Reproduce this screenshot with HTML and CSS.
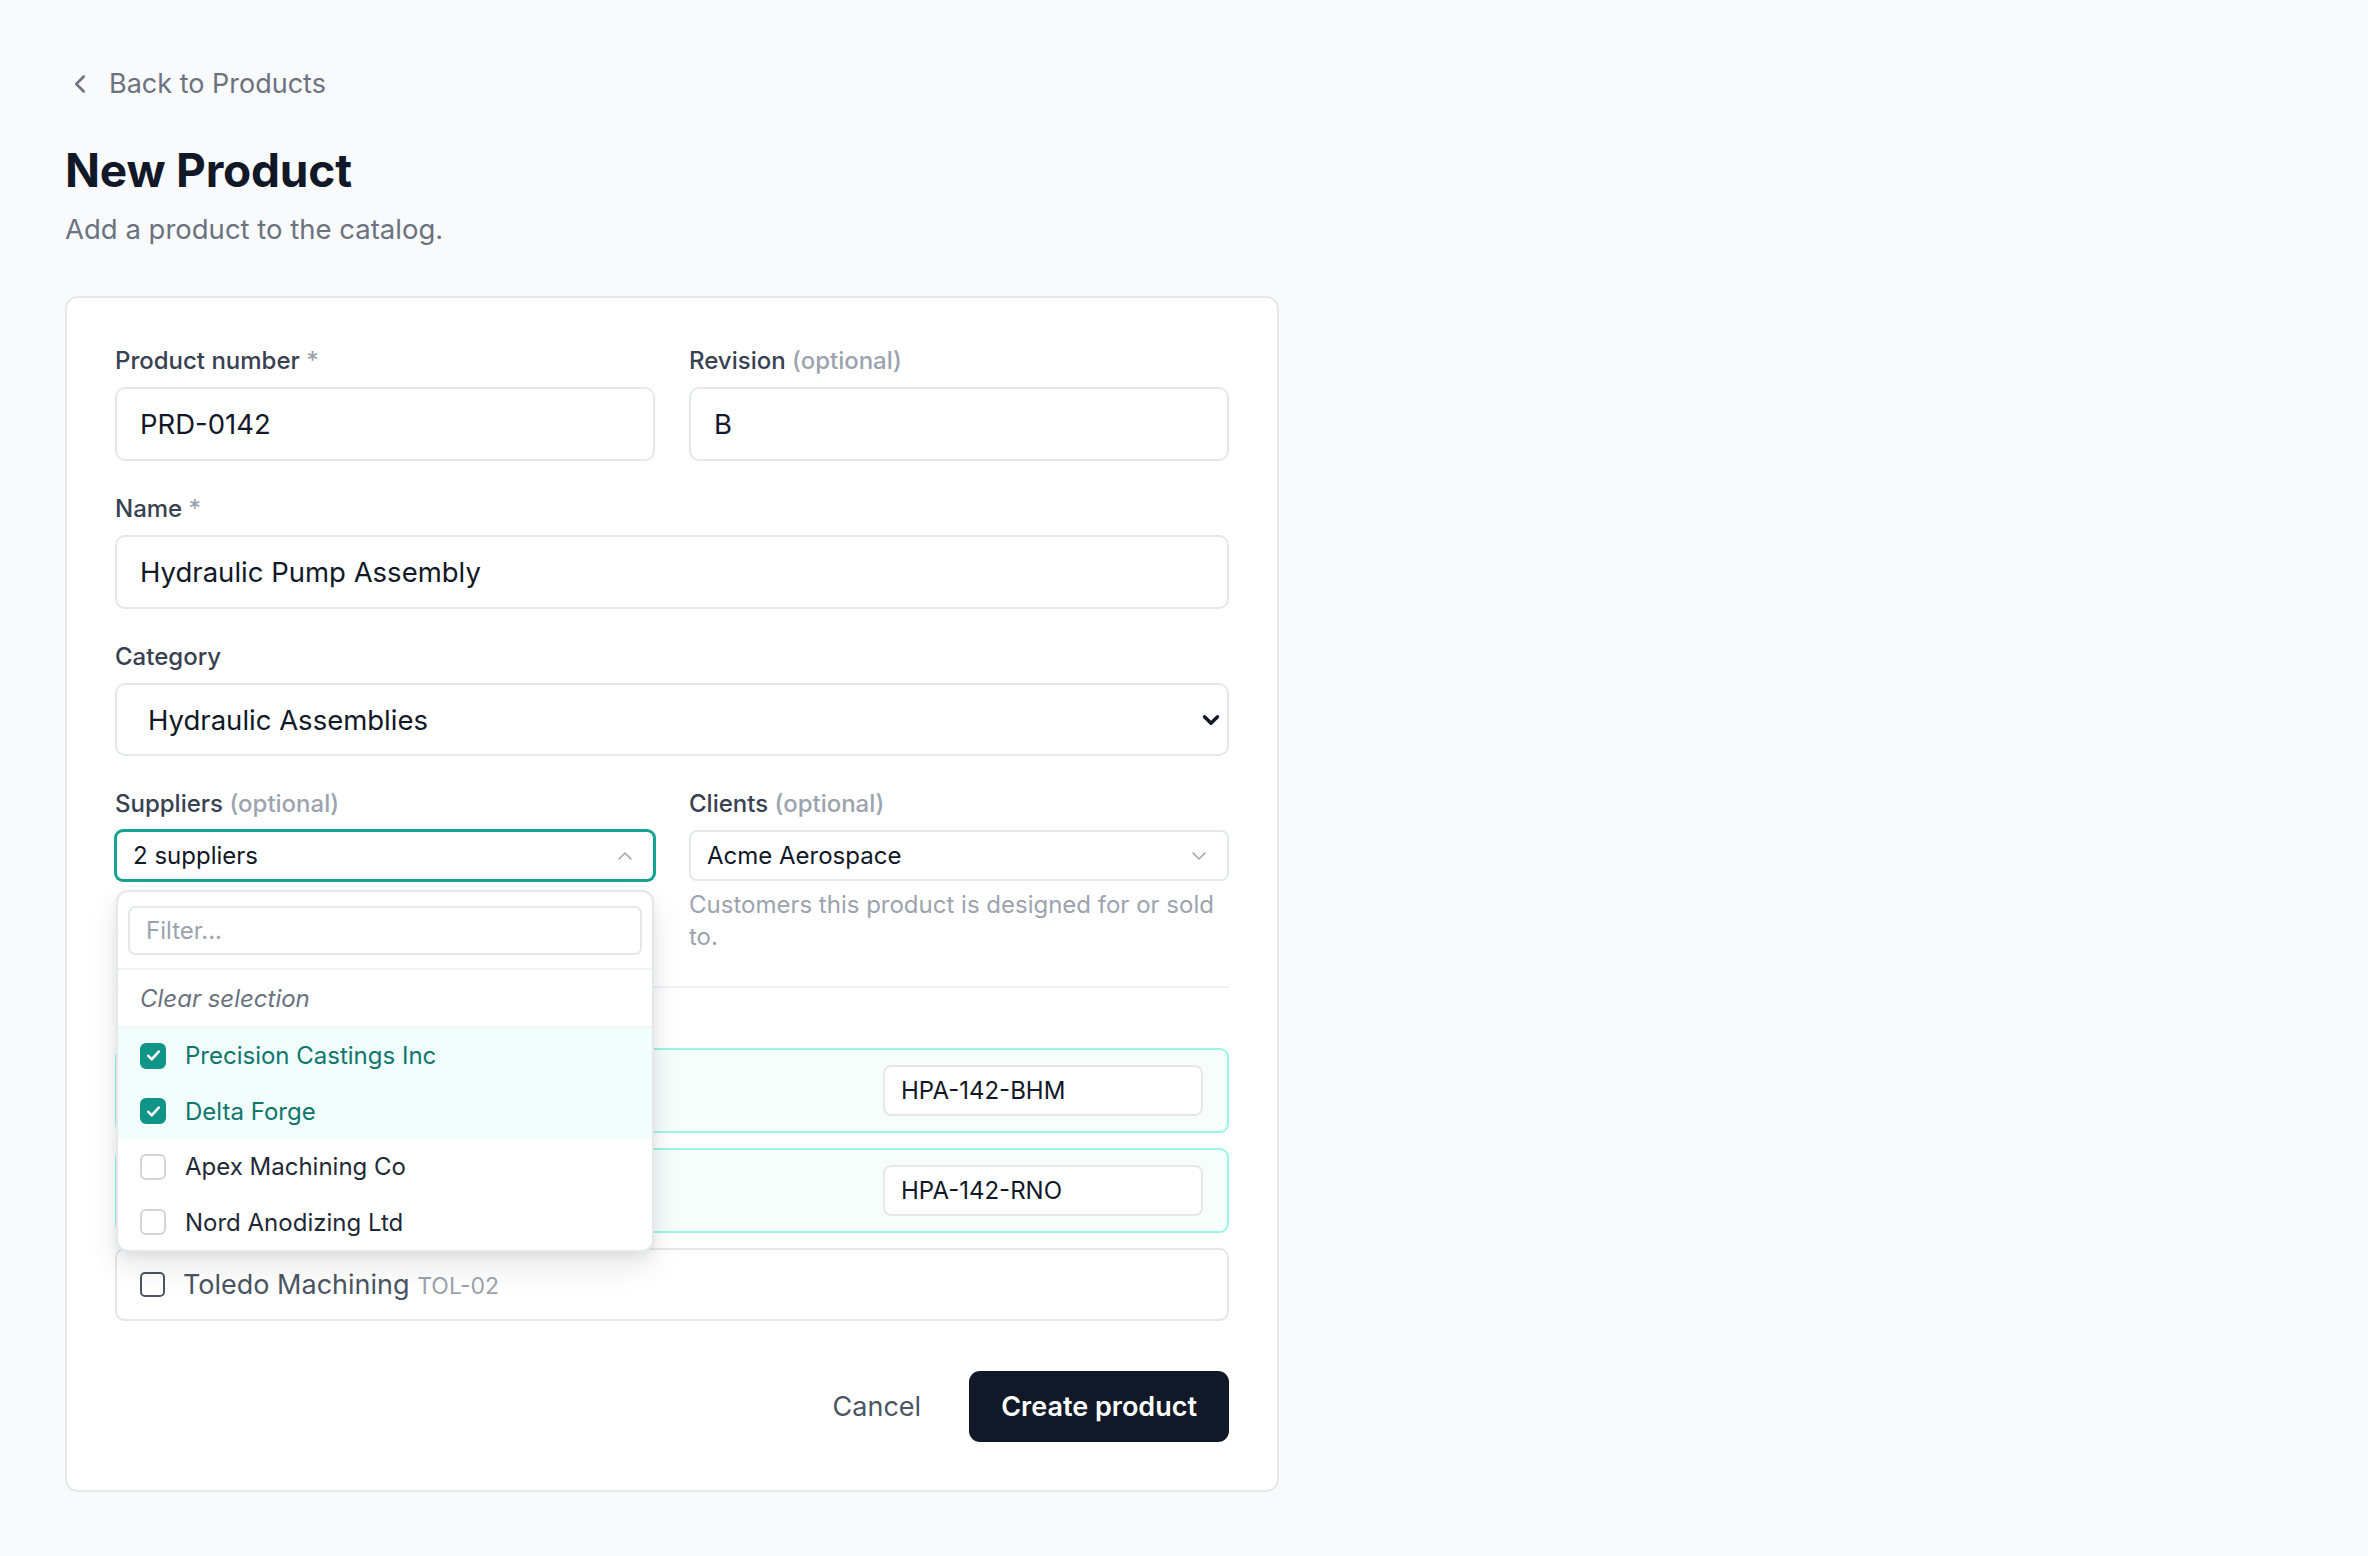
FILE: index.html
```html
<!DOCTYPE html>
<html lang="en">
<head>
    <meta charset="UTF-8">
    <meta name="viewport" content="width=device-width, initial-scale=1.0">
    <title>New Product</title>
    <link rel="stylesheet" href="styles.css">
</head>
<body>
    <div class="page">
        <a class="back-link" href="#">
            <svg class="back-icon" viewBox="0 0 24 24" fill="none" stroke="currentColor" stroke-width="2" stroke-linecap="round" stroke-linejoin="round"><path d="M15 18l-6-6 6-6"/></svg>
            Back to Products
        </a>
        <h1 class="page-title">New Product</h1>
        <p class="page-subtitle">Add a product to the catalog.</p>

        <form class="card" onsubmit="return false">
            <div class="row-2">
                <div class="field">
                    <label class="label">Product number <span class="muted">*</span></label>
                    <input class="input" type="text" value="PRD-0142">
                </div>
                <div class="field">
                    <label class="label">Revision <span class="muted">(optional)</span></label>
                    <input class="input" type="text" value="B">
                </div>
            </div>

            <div class="field">
                <label class="label">Name <span class="muted">*</span></label>
                <input class="input" type="text" value="Hydraulic Pump Assembly">
            </div>

            <div class="field">
                <label class="label">Category</label>
                <div class="select-wrap">
                    <select class="select">
                        <option>Hydraulic Assemblies</option>
                        <option>Castings</option>
                        <option>Machined Parts</option>
                    </select>
                    <svg class="select-icon" viewBox="0 0 24 24" fill="none" stroke="currentColor" stroke-width="3.2" stroke-linecap="round" stroke-linejoin="round"><path d="M6 9l6 6 6-6"/></svg>
                </div>
            </div>

            <div class="row-2">
                <div class="field field-combo">
                    <label class="label">Suppliers <span class="muted">(optional)</span></label>
                    <button type="button" class="combo combo-open">
                        <span>2 suppliers</span>
                        <svg class="combo-icon" viewBox="0 0 24 24" fill="none" stroke="currentColor" stroke-width="1.5" stroke-linecap="round" stroke-linejoin="round"><path d="M6 15l6-6 6 6"/></svg>
                    </button>

                    <!-- открытый список поставщиков -->
                    <div class="dropdown">
                        <div class="dropdown-search">
                            <input class="filter" type="text" placeholder="Filter...">
                        </div>
                        <div class="dropdown-clear">Clear selection</div>
                        <div class="dropdown-item selected">
                            <span class="check checked"><svg viewBox="0 0 24 24" fill="none" stroke="#fff" stroke-width="3" stroke-linecap="round" stroke-linejoin="round"><path d="M6 12.5l4 4 8-9"/></svg></span>
                            Precision Castings Inc
                        </div>
                        <div class="dropdown-item selected">
                            <span class="check checked"><svg viewBox="0 0 24 24" fill="none" stroke="#fff" stroke-width="3" stroke-linecap="round" stroke-linejoin="round"><path d="M6 12.5l4 4 8-9"/></svg></span>
                            Delta Forge
                        </div>
                        <div class="dropdown-item">
                            <span class="check"></span>
                            Apex Machining Co
                        </div>
                        <div class="dropdown-item">
                            <span class="check"></span>
                            Nord Anodizing Ltd
                        </div>
                    </div>
                </div>
                <div class="field">
                    <label class="label">Clients <span class="muted">(optional)</span></label>
                    <button type="button" class="combo">
                        <span>Acme Aerospace</span>
                        <svg class="combo-icon" viewBox="0 0 24 24" fill="none" stroke="currentColor" stroke-width="1.5" stroke-linecap="round" stroke-linejoin="round"><path d="M6 9l6 6 6-6"/></svg>
                    </button>
                    <p class="help">Customers this product is designed for or sold to.</p>
                </div>
            </div>

            <!-- строки под списком закрыты выпадающим меню -->
            <div class="section">
                <div class="supplier-list">
                    <div class="supplier-row active">
                        <span class="box box-checked"></span>
                        <span class="supplier-name"></span>
                        <input class="part-input" type="text" value="HPA-142-BHM">
                    </div>
                    <div class="supplier-row active">
                        <span class="box box-checked"></span>
                        <span class="supplier-name"></span>
                        <input class="part-input" type="text" value="HPA-142-RNO">
                    </div>
                    <div class="supplier-row">
                        <span class="box"></span>
                        <span class="supplier-name">Toledo Machining <span class="supplier-code">TOL-02</span></span>
                    </div>
                </div>
            </div>

            <div class="actions">
                <button type="button" class="btn-cancel">Cancel</button>
                <button type="submit" class="btn-primary">Create product</button>
            </div>
        </form>
    </div>
</body>
</html>
```

FILE: styles.css
```css
* {
    box-sizing: border-box;
}
body {
    margin: 0;
    font-family: 'Inter', 'Noto Sans', sans-serif;
    background-color: #f9fafb;
    color: #111827;
}
.page {
    padding: 66px 65px;
}
.back-link {
    display: inline-flex;
    align-items: center;
    gap: 14px;
    font-size: 27px;
    line-height: 36px;
    color: #6b7280;
    text-decoration: none;
}
.back-icon {
    width: 30px;
    height: 30px;
}
.page-title {
    margin: 39px 0 0;
    font-size: 46px;
    line-height: 56px;
    font-weight: 700;
    letter-spacing: -0.2px;
    color: #111827;
}
.page-subtitle {
    margin: 13px 0 0;
    font-size: 27.5px;
    line-height: 36px;
    color: #6b7280;
}
.card {
    margin-top: 49px;
    width: 1214px;
    padding: 48px;
    background-color: #fff;
    border: 2px solid #e5e7eb;
    border-radius: 13px;
    display: flex;
    flex-direction: column;
    gap: 33px;
}
.row-2 {
    display: grid;
    grid-template-columns: 1fr 1fr;
    gap: 34px;
}
.field {
    display: flex;
    flex-direction: column;
}
.field-combo {
    position: relative;
}
.label {
    font-size: 24px;
    line-height: 30px;
    font-weight: 500;
    color: #374151;
    margin-bottom: 11px;
}
.muted {
    color: #9ca3af;
}
.input,
.select {
    height: 74px;
    width: 100%;
    padding: 0 23px;
    font: inherit;
    font-size: 27.5px;
    color: #111827;
    background-color: #fff;
    border: 2px solid #e5e7eb;
    border-radius: 10px;
    outline: none;
}
.select-wrap {
    position: relative;
}
.select {
    height: 73px;
    padding-left: 31px;
    appearance: none;
    -webkit-appearance: none;
}
.select-icon {
    position: absolute;
    right: 5px;
    top: 50%;
    width: 26px;
    height: 26px;
    margin-top: -13px;
    color: #111827;
    pointer-events: none;
}
.combo {
    height: 51px;
    width: 100%;
    display: flex;
    align-items: center;
    justify-content: space-between;
    padding: 0 16px 0 16px;
    font: inherit;
    font-size: 24px;
    color: #111827;
    background-color: #fff;
    border: 2px solid #e5e7eb;
    border-radius: 8px;
    cursor: pointer;
}
.combo-open {
    border-color: #17a392;
    box-shadow: 0 0 0 1px #17a392;
}
.combo-icon {
    width: 24px;
    height: 24px;
    color: #9ca3af;
}
.help {
    margin: 8px 0 0;
    font-size: 24px;
    line-height: 32px;
    color: #9ca3af;
}

/* выпадающий список */
.dropdown {
    position: absolute;
    top: 101px;
    left: 1px;
    right: 1px;
    z-index: 10;
    background-color: #fff;
    border: 2px solid #e5e7eb;
    border-radius: 12px;
    box-shadow: 0 14px 30px rgba(17, 24, 39, 0.10), 0 4px 10px rgba(17, 24, 39, 0.06);
    overflow: hidden;
}
.dropdown-search {
    padding: 14px 10px 13px;
    border-bottom: 2px solid #f1f2f4;
}
.filter {
    width: 100%;
    height: 49px;
    padding: 0 16px;
    font: inherit;
    font-size: 24px;
    color: #111827;
    border: 2px solid #e5e7eb;
    border-radius: 7px;
    outline: none;
}
.filter::placeholder {
    color: #9ca3af;
}
.dropdown-clear {
    height: 58px;
    display: flex;
    align-items: center;
    padding-left: 22px;
    font-size: 24px;
    font-style: italic;
    color: #6b7280;
    border-bottom: 2px solid #f3f4f6;
}
.dropdown-item {
    height: 55.5px;
    display: flex;
    align-items: center;
    gap: 19px;
    padding-left: 22px;
    font-size: 24px;
    color: #1f2937;
}
.dropdown-item.selected {
    background-color: #f0fdfa;
    color: #0f766e;
}
.check {
    width: 26px;
    height: 26px;
    flex-shrink: 0;
    border: 2px solid #d1d5db;
    border-radius: 6px;
    background-color: #fff;
    display: flex;
    align-items: center;
    justify-content: center;
}
.check.checked {
    border-color: #119488;
    background-color: #119488;
}
.check svg {
    width: 21px;
    height: 21px;
}

/* строки поставщиков */
.section {
    border-top: 2px solid #eef0f2;
    padding-top: 60px;
}
.supplier-list {
    display: flex;
    flex-direction: column;
    gap: 15px;
}
.supplier-row {
    display: flex;
    align-items: center;
    gap: 18px;
    min-height: 73px;
    padding: 15px 24px 15px 23px;
    border: 2px solid #e5e7eb;
    border-radius: 9px;
    background-color: #fff;
}
.supplier-row.active {
    border-color: #99f6e4;
    background-color: #f6fdfb;
}
.box {
    width: 25px;
    height: 25px;
    flex-shrink: 0;
    border: 2.5px solid #4b5563;
    border-radius: 5px;
}
.box-checked {
    border-color: #119488;
    background-color: #119488;
}
.supplier-name {
    flex: 1;
    font-size: 27px;
    color: #4b5563;
}
.supplier-code {
    font-size: 23px;
    color: #9ca3af;
}
.part-input {
    width: 320px;
    height: 51px;
    padding: 0 16px;
    font: inherit;
    font-size: 24px;
    color: #111827;
    background-color: #fff;
    border: 2px solid #e5e7eb;
    border-radius: 8px;
    outline: none;
}
.actions {
    margin-top: 17px;
    display: flex;
    justify-content: flex-end;
    align-items: center;
    gap: 24px;
}
.btn-cancel {
    padding: 0 24px;
    font: inherit;
    font-size: 27px;
    color: #4b5563;
    background: none;
    border: none;
    cursor: pointer;
}
.btn-primary {
    height: 71px;
    padding: 0 32px;
    font: inherit;
    font-size: 27px;
    font-weight: 600;
    color: #fff;
    background-color: #111827;
    border: none;
    border-radius: 11px;
    cursor: pointer;
}
```
